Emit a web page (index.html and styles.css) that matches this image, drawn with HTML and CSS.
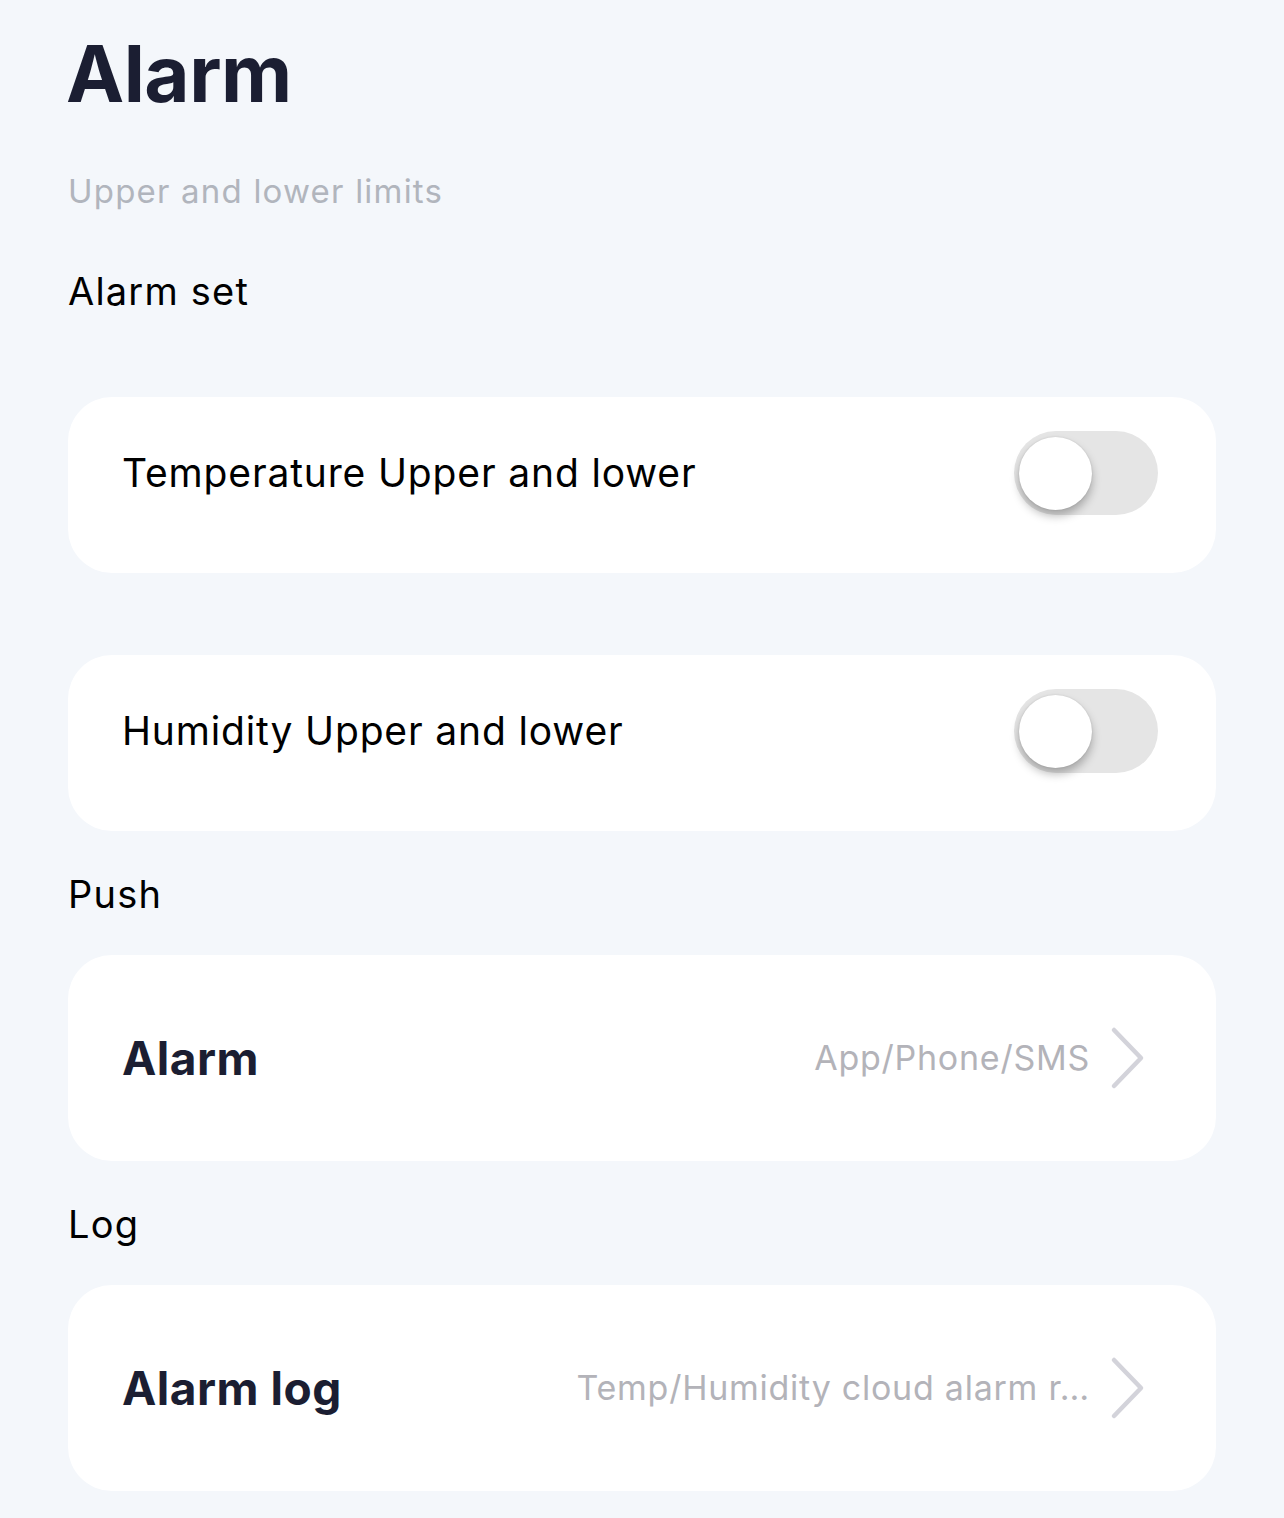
FILE: index.html
```html
<!DOCTYPE html>
<html lang="en">
<head>
<meta charset="utf-8">
<title>Alarm</title>
<link rel="stylesheet" href="styles.css">
</head>
<body>
<main class="page">
  <h1 class="title">Alarm</h1>
  <p class="subtitle">Upper and lower limits</p>

  <section class="section section-alarmset">
    <h2 class="label label-wide">Alarm set</h2>
    <div class="card card-toggle">
      <span class="row-text">Temperature Upper and lower</span>
      <span class="switch"><span class="knob"></span></span>
    </div>
    <div class="card card-toggle">
      <span class="row-text">Humidity Upper and lower</span>
      <span class="switch"><span class="knob"></span></span>
    </div>
  </section>

  <section class="section">
    <h2 class="label">Push</h2>
    <div class="card card-nav">
      <span class="row-title">Alarm</span>
      <span class="row-right">
        <span class="row-value">App/Phone/SMS</span>
        <svg class="chevron" viewBox="0 0 36 64" width="36" height="64" aria-hidden="true"><path d="M4 4 L31 32 L4 60" fill="none" stroke="#d3d3da" stroke-width="4.5" stroke-linecap="round" stroke-linejoin="round"/></svg>
      </span>
    </div>
  </section>

  <section class="section">
    <h2 class="label">Log</h2>
    <div class="card card-nav">
      <span class="row-title">Alarm log</span>
      <span class="row-right">
        <span class="row-value">Temp/Humidity cloud alarm r…</span>
        <svg class="chevron" viewBox="0 0 36 64" width="36" height="64" aria-hidden="true"><path d="M4 4 L31 32 L4 60" fill="none" stroke="#d3d3da" stroke-width="4.5" stroke-linecap="round" stroke-linejoin="round"/></svg>
      </span>
    </div>
  </section>
</main>
</body>
</html>
```
FILE: styles.css
```css
* { box-sizing: border-box; }

html, body {
  margin: 0;
  padding: 0;
  background: #f4f7fb;
}

body {
  font-family: Inter, "Noto Sans", "Liberation Sans", sans-serif;
  color: #000;
}

.page {
  padding: 27px 68px 0 68px;
  display: flex;
  flex-direction: column;
}

.title {
  margin: 0 0 0 -2px;
  font-size: 78px;
  line-height: 94px;
  font-weight: 700;
  color: #1b1e32;
  letter-spacing: -0.5px;
}

.subtitle {
  margin: 50px 0 0 0;
  font-size: 33px;
  line-height: 40px;
  color: #b1b5bd;
  letter-spacing: 1.2px;
}

.section {
  display: flex;
  flex-direction: column;
  margin-top: 39px;
}

.section-alarmset {
  margin-top: 56px;
  gap: 82px;
}

.label {
  margin: 0 0 37px 0;
  font-size: 38px;
  line-height: 48px;
  font-weight: 400;
  color: #000;
  letter-spacing: 1.2px;
}

.label-wide {
  margin-bottom: 0;
}

.card {
  background: #fff;
  border-radius: 44px;
  display: flex;
  align-items: center;
  justify-content: space-between;
}

.card-toggle {
  height: 176px;
  padding: 0 58px 24px 54px;
}

.card-nav {
  height: 206px;
  padding: 0 70px 0 54px;
}

.row-text {
  font-size: 39px;
  line-height: 48px;
  color: #000;
  letter-spacing: 0.85px;
}

.row-title {
  font-size: 46px;
  line-height: 56px;
  font-weight: 700;
  color: #1b1e32;
  letter-spacing: 0.5px;
}

.row-right {
  display: flex;
  align-items: center;
  gap: 20px;
}

.row-value {
  font-size: 34px;
  line-height: 44px;
  color: #b3b3b9;
  white-space: nowrap;
  letter-spacing: 0.75px;
}

.chevron {
  display: block;
  flex: none;
}

.switch {
  flex: none;
  width: 144px;
  height: 84px;
  border-radius: 42px;
  background: #e5e5e5;
  display: flex;
  align-items: center;
  padding-left: 5px;
}

.knob {
  width: 73px;
  height: 73px;
  border-radius: 50%;
  background: #fff;
  box-shadow: 0 6px 10px rgba(0, 0, 0, 0.28), 0 0 2px rgba(0, 0, 0, 0.12);
}
```
